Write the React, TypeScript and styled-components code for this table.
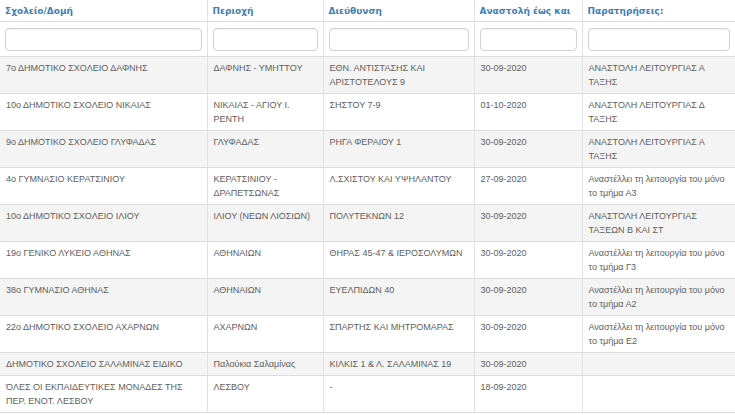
import React from 'react';
import styled, { createGlobalStyle } from 'styled-components';

const GlobalStyle = createGlobalStyle`
  body {
    margin: 0;
    background: #fff;
    font-family: "Liberation Sans", Arial, sans-serif;
  }
`

const Table = styled.table`
  width: 735px;
  border-collapse: collapse;
  table-layout: fixed;
  color: #606060;
  font-size: 9px;
  line-height: 14px;
`

const HeadCell = styled.th`
  height: 21px;
  padding: 0 5px;
  text-align: left;
  vertical-align: middle;
  font-family: "DejaVu Sans", Verdana, sans-serif;
  font-size: 9px;
  font-weight: bold;
  color: #3f81b6;
  border-right: 1px solid #e2e2e2;
  border-bottom: 1px solid #dcdcdc;
  white-space: nowrap;

  &:last-child {
    border-right: none;
  }
`

const FilterCell = styled.td`
  height: 34px;
  padding: 0 5px;
  vertical-align: middle;
  border-right: 1px solid #e2e2e2;
  border-bottom: 1px solid #dcdcdc;

  &:last-child {
    border-right: none;
  }
`

const FilterInput = styled.input`
  display: block;
  box-sizing: border-box;
  width: 100%;
  height: 23px;
  margin: 0;
  border: 1px solid #d2d2d2;
  border-radius: 4px;
  background: #fff;
  box-shadow: inset 0 1px 1px rgba(0, 0, 0, 0.05);
`

const Row = styled.tr<{ $striped: boolean }>`
  background: ${p => (p.$striped ? '#f4f4f4' : '#fff')};
`

const Cell = styled.td`
  padding: 4px 5px 4px 6px;
  vertical-align: top;
  white-space: nowrap;
  overflow: hidden;
  border-right: 1px solid #e2e2e2;
  border-bottom: 1px solid #dcdcdc;

  &:last-child {
    border-right: none;
  }
`

const columns = [
  { title: 'Σχολείο/Δομή', width: 207 },
  { title: 'Περιοχή', width: 116 },
  { title: 'Διεύθυνση', width: 151 },
  { title: 'Αναστολή έως και', width: 108 },
  { title: 'Παρατηρήσεις:', width: 153 },
];

// every cell is a list of its lines, as they wrap in the page
type Line = string[];

const rows: Line[][] = [
  [['7ο ΔΗΜΟΤΙΚΟ ΣΧΟΛΕΙΟ ΔΑΦΝΗΣ'], ['ΔΑΦΝΗΣ - ΥΜΗΤΤΟΥ'], ['ΕΘΝ. ΑΝΤΙΣΤΑΣΗΣ ΚΑΙ', 'ΑΡΙΣΤΟΤΕΛΟΥΣ 9'], ['30-09-2020'], ['ΑΝΑΣΤΟΛΗ ΛΕΙΤΟΥΡΓΙΑΣ Α', 'ΤΑΞΗΣ']],
  [['10ο ΔΗΜΟΤΙΚΟ ΣΧΟΛΕΙΟ ΝΙΚΑΙΑΣ'], ['ΝΙΚΑΙΑΣ - ΑΓΙΟΥ Ι.', 'ΡΕΝΤΗ'], ['ΣΗΣΤΟΥ 7-9'], ['01-10-2020'], ['ΑΝΑΣΤΟΛΗ ΛΕΙΤΟΥΡΓΙΑΣ Δ', 'ΤΑΞΗΣ']],
  [['9ο ΔΗΜΟΤΙΚΟ ΣΧΟΛΕΙΟ ΓΛΥΦΑΔΑΣ'], ['ΓΛΥΦΑΔΑΣ'], ['ΡΗΓΑ ΦΕΡΑΙΟΥ 1'], ['30-09-2020'], ['ΑΝΑΣΤΟΛΗ ΛΕΙΤΟΥΡΓΙΑΣ Α', 'ΤΑΞΗΣ']],
  [['4ο ΓΥΜΝΑΣΙΟ ΚΕΡΑΤΣΙΝΙΟΥ'], ['ΚΕΡΑΤΣΙΝΙΟΥ -', 'ΔΡΑΠΕΤΣΩΝΑΣ'], ['Λ.ΣΧΙΣΤΟΥ ΚΑΙ ΥΨΗΛΑΝΤΟΥ'], ['27-09-2020'], ['Αναστέλλει τη λειτουργία του μόνο', 'το τμήμα Α3']],
  [['10ο ΔΗΜΟΤΙΚΟ ΣΧΟΛΕΙΟ ΙΛΙΟΥ'], ['ΙΛΙΟΥ (ΝΕΩΝ ΛΙΟΣΙΩΝ)'], ['ΠΟΛΥΤΕΚΝΩΝ 12'], ['30-09-2020'], ['ΑΝΑΣΤΟΛΗ ΛΕΙΤΟΥΡΓΙΑΣ', 'ΤΑΞΕΩΝ Β ΚΑΙ ΣΤ']],
  [['19ο ΓΕΝΙΚΟ ΛΥΚΕΙΟ ΑΘΗΝΑΣ'], ['ΑΘΗΝΑΙΩΝ'], ['ΘΗΡΑΣ 45-47 & ΙΕΡΟΣΟΛΥΜΩΝ'], ['30-09-2020'], ['Αναστέλλει τη λειτουργία του μόνο', 'το τμήμα Γ3']],
  [['38ο ΓΥΜΝΑΣΙΟ ΑΘΗΝΑΣ'], ['ΑΘΗΝΑΙΩΝ'], ['ΕΥΕΛΠΙΔΩΝ 40'], ['30-09-2020'], ['Αναστέλλει τη λειτουργία του μόνο', 'το τμήμα Α2']],
  [['22ο ΔΗΜΟΤΙΚΟ ΣΧΟΛΕΙΟ ΑΧΑΡΝΩΝ'], ['ΑΧΑΡΝΩΝ'], ['ΣΠΑΡΤΗΣ ΚΑΙ ΜΗΤΡΟΜΑΡΑΣ'], ['30-09-2020'], ['Αναστέλλει τη λειτουργία του μόνο', 'το τμήμα Ε2']],
  [['ΔΗΜΟΤΙΚΟ ΣΧΟΛΕΙΟ ΣΑΛΑΜΙΝΑΣ ΕΙΔΙΚΟ'], ['Παλούκια Σαλαμίνας'], ['ΚΙΛΚΙΣ 1 & Λ. ΣΑΛΑΜΙΝΑΣ 19'], ['30-09-2020'], []],
  [['ΌΛΕΣ ΟΙ ΕΚΠΑΙΔΕΥΤΙΚΕΣ ΜΟΝΑΔΕΣ ΤΗΣ', 'ΠΕΡ. ΕΝΟΤ. ΛΕΣΒΟΥ'], ['ΛΕΣΒΟΥ'], ['-'], ['18-09-2020'], []],
];

export default function App() {
  return (
    <>
      <GlobalStyle />
      <Table>
        <colgroup>
          {columns.map(col =>
            <col key={col.title} style={{ width: col.width }} />
          )}
        </colgroup>
        <thead>
          <tr>
            {columns.map(col =>
              <HeadCell key={col.title}>{col.title}</HeadCell>
            )}
          </tr>
          <tr>
            {columns.map(col =>
              <FilterCell key={col.title}>
                <FilterInput type='text' aria-label={col.title} />
              </FilterCell>
            )}
          </tr>
        </thead>
        <tbody>
          {rows.map((row, i) =>
            <Row key={i} $striped={i % 2 === 0}>
              {row.map((lines, j) =>
                <Cell key={j}>
                  {lines.map((line, k) =>
                    <React.Fragment key={k}>
                      {k > 0 && <br />}
                      {line}
                    </React.Fragment>
                  )}
                </Cell>
              )}
            </Row>
          )}
        </tbody>
      </Table>
    </>
  )
}
